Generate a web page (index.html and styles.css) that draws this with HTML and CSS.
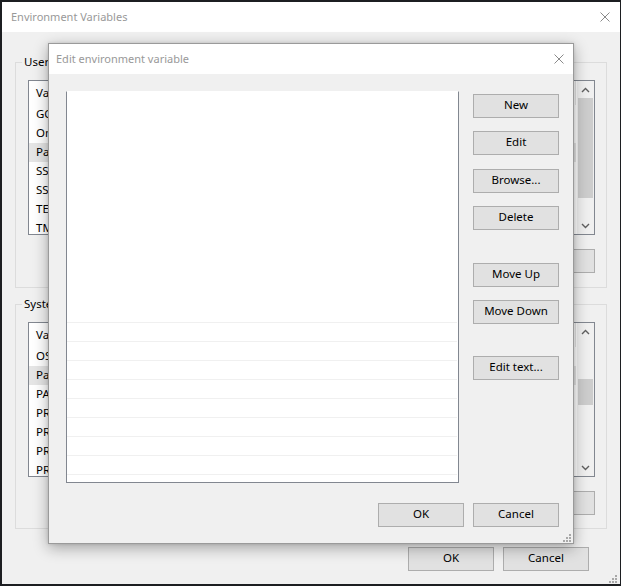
FILE: index.html
```html
<!DOCTYPE html>
<html lang="en">
<head>
    <meta charset="UTF-8">
    <title>Environment Variables</title>
    <link rel="stylesheet" href="styles.css">
</head>
<body>
    <!-- Janela principal -->
    <div class="window">
        <div class="titlebar">
            <span class="title">Environment Variables</span>
            <svg class="close" width="10" height="10" viewBox="0 0 10 10">
                <path d="M0.5 0.5 L9.5 9.5 M9.5 0.5 L0.5 9.5" stroke="#8a8a8a" stroke-width="1" fill="none"/>
            </svg>
        </div>

        <div class="window-body">
            <fieldset class="group">
                <legend>User variables for Admin</legend>
                <div class="listview">
                    <div class="lv-content">
                        <div class="lv-header"><span class="col-var">Variable</span><span class="col-val">Value</span></div>
                        <div class="lv-row"><span class="col-var">GOPATH</span><span class="col-val">C:\Users\Admin\go</span></div>
                        <div class="lv-row"><span class="col-var">OneDrive</span><span class="col-val">C:\Users\Admin\OneDrive</span></div>
                        <div class="lv-row selected"><span class="col-var">Path</span><span class="col-val">C:\Users\Admin\AppData\Local\Microsoft\WindowsApps;</span></div>
                        <div class="lv-row"><span class="col-var">SSH_AUTH_SOCK</span><span class="col-val">\\.\pipe\openssh-ssh-agent</span></div>
                        <div class="lv-row"><span class="col-var">SSH_KEY</span><span class="col-val">C:\Users\Admin\.ssh\id_rsa</span></div>
                        <div class="lv-row"><span class="col-var">TEMP</span><span class="col-val">C:\Users\Admin\AppData\Local\Temp</span></div>
                        <div class="lv-row"><span class="col-var">TMP</span><span class="col-val">C:\Users\Admin\AppData\Local\Temp</span></div>
                    </div>
                    <div class="scrollbar">
                        <div class="sb-btn">
                            <svg width="9" height="6" viewBox="0 0 9 6"><path d="M1 5 L4.5 1.5 L8 5" stroke="#606060" stroke-width="1.4" fill="none"/></svg>
                        </div>
                        <div class="sb-track"><div class="sb-thumb user-thumb"></div></div>
                        <div class="sb-btn">
                            <svg width="9" height="6" viewBox="0 0 9 6"><path d="M1 1 L4.5 4.5 L8 1" stroke="#606060" stroke-width="1.4" fill="none"/></svg>
                        </div>
                    </div>
                </div>
                <div class="btn-row">
                    <button class="btn">New...</button>
                    <button class="btn">Edit...</button>
                    <button class="btn">Delete</button>
                </div>
            </fieldset>

            <fieldset class="group system">
                <legend>System variables</legend>
                <div class="listview">
                    <div class="lv-content">
                        <div class="lv-header"><span class="col-var">Variable</span><span class="col-val">Value</span></div>
                        <div class="lv-row"><span class="col-var">OS</span><span class="col-val">Windows_NT</span></div>
                        <div class="lv-row selected"><span class="col-var">Path</span><span class="col-val">C:\Windows\system32;C:\Windows;</span></div>
                        <div class="lv-row"><span class="col-var">PATHEXT</span><span class="col-val">.COM;.EXE;.BAT;.CMD</span></div>
                        <div class="lv-row"><span class="col-var">PROCESSOR_ARCHITECTURE</span><span class="col-val">AMD64</span></div>
                        <div class="lv-row"><span class="col-var">PROCESSOR_IDENTIFIER</span><span class="col-val">Intel64 Family 6</span></div>
                        <div class="lv-row"><span class="col-var">PROCESSOR_LEVEL</span><span class="col-val">6</span></div>
                        <div class="lv-row"><span class="col-var">PROCESSOR_REVISION</span><span class="col-val">9e0a</span></div>
                    </div>
                    <div class="scrollbar">
                        <div class="sb-btn">
                            <svg width="9" height="6" viewBox="0 0 9 6"><path d="M1 5 L4.5 1.5 L8 5" stroke="#606060" stroke-width="1.4" fill="none"/></svg>
                        </div>
                        <div class="sb-track"><div class="sb-thumb system-thumb"></div></div>
                        <div class="sb-btn">
                            <svg width="9" height="6" viewBox="0 0 9 6"><path d="M1 1 L4.5 4.5 L8 1" stroke="#606060" stroke-width="1.4" fill="none"/></svg>
                        </div>
                    </div>
                </div>
                <div class="btn-row">
                    <button class="btn">New...</button>
                    <button class="btn">Edit...</button>
                    <button class="btn">Delete</button>
                </div>
            </fieldset>

            <div class="footer">
                <button class="btn">OK</button>
                <button class="btn">Cancel</button>
            </div>
        </div>

        <svg class="grip window-grip" width="8" height="8" viewBox="0 0 8 8">
            <rect x="6" y="0" width="2" height="2"/>
            <rect x="3" y="3" width="2" height="2"/><rect x="6" y="3" width="2" height="2"/>
            <rect x="0" y="6" width="2" height="2"/><rect x="3" y="6" width="2" height="2"/><rect x="6" y="6" width="2" height="2"/>
        </svg>
    </div>

    <!-- Diálogo de edição -->
    <div class="dialog">
        <div class="titlebar dialog-titlebar">
            <span class="title">Edit environment variable</span>
            <svg class="close" width="10" height="10" viewBox="0 0 10 10">
                <path d="M0.5 0.5 L9.5 9.5 M9.5 0.5 L0.5 9.5" stroke="#8a8a8a" stroke-width="1" fill="none"/>
            </svg>
        </div>
        <div class="dialog-body">
            <div class="dialog-main">
                <div class="edit-list">
                    <div class="edit-spacer"></div>
                    <div class="edit-row"></div>
                    <div class="edit-row"></div>
                    <div class="edit-row"></div>
                    <div class="edit-row"></div>
                    <div class="edit-row"></div>
                    <div class="edit-row"></div>
                    <div class="edit-row"></div>
                    <div class="edit-row"></div>
                    <div class="edit-row"></div>
                </div>
                <div class="side-buttons">
                    <button class="btn b-new">New</button>
                    <button class="btn b-edit">Edit</button>
                    <button class="btn b-browse">Browse...</button>
                    <button class="btn b-delete">Delete</button>
                    <button class="btn b-up">Move Up</button>
                    <button class="btn b-down">Move Down</button>
                    <button class="btn b-text">Edit text...</button>
                </div>
            </div>
            <div class="dialog-footer">
                <button class="btn">OK</button>
                <button class="btn">Cancel</button>
            </div>
        </div>
        <svg class="grip dialog-grip" width="8" height="8" viewBox="0 0 8 8">
            <rect x="6" y="0" width="2" height="2"/>
            <rect x="3" y="3" width="2" height="2"/><rect x="6" y="3" width="2" height="2"/>
            <rect x="0" y="6" width="2" height="2"/><rect x="3" y="6" width="2" height="2"/><rect x="6" y="6" width="2" height="2"/>
        </svg>
    </div>
</body>
</html>
```

FILE: styles.css
```css
/* Reset */
* {
    box-sizing: border-box;
}

body {
    margin: 0;
    padding: 2px 0 0 2px;
    width: 621px;
    height: 586px;
    overflow: hidden;
    position: relative;
    background: #1c1e21;
    font-family: "Noto Sans", "Segoe UI", sans-serif;
    font-size: 11.5px;
    color: #000;
}

/* Janela principal */
.window {
    position: relative;
    width: 618px;
    height: 582px;
    background: #f0f0f0;
    display: flex;
    flex-direction: column;
}

.titlebar {
    height: 30px;
    flex: none;
    background: #fff;
    display: flex;
    align-items: center;
    justify-content: space-between;
    padding: 0 10px 2px 9px;
}

.title {
    font-size: 11px;
    color: #999;
}

.close {
    display: block;
    margin-top: 2px;
}

.window-body {
    padding: 22px 13px 0 13px;
}

.group {
    margin: 0;
    padding: 10px 11px 14px 12px;
    border: 1px solid #dcdcdc;
    min-width: 0;
}

.group legend {
    margin-left: -6px;
    padding: 0 2px;
    line-height: 15px;
    height: 16px;
}

.group.system {
    margin-top: 8px;
    padding-bottom: 13px;
}

/* Lista */
.listview {
    height: 155px;
    border: 1px solid #828790;
    background: #fff;
    display: flex;
    overflow: hidden;
}

.lv-content {
    flex: 1;
    overflow: hidden;
}

.lv-header,
.lv-row {
    display: flex;
    width: 547px;
    white-space: nowrap;
}

.lv-header {
    height: 24px;
    align-items: center;
}

.lv-header span {
    height: 24px;
    line-height: 23px;
    border-right: 1px solid #e5e5e5;
}

.lv-row {
    height: 19px;
    line-height: 17px;
}

.lv-row.selected {
    background: #e5e5e5;
}

.col-var {
    width: 170px;
    padding-left: 7px;
    overflow: hidden;
}

.col-val {
    width: 377px;
    padding-left: 6px;
    overflow: hidden;
}

.scrollbar {
    width: 17px;
    background: #f0f0f0;
    display: flex;
    flex-direction: column;
}

.sb-btn {
    height: 17px;
    display: flex;
    align-items: center;
    justify-content: center;
}

.sb-track {
    flex: 1;
}

.sb-thumb {
    margin: 0 1px;
    background: #cdcdcd;
}

.user-thumb {
    height: 100px;
}

.system-thumb {
    margin-top: 39px;
    height: 26px;
}

/* Botões */
.btn {
    width: 86px;
    height: 24px;
    padding: 0 0 2px;
    background: #e1e1e1;
    border: 1px solid #adadad;
    font-family: inherit;
    font-size: 11.5px;
    line-height: 20px;
    color: #000;
}

.btn-row {
    margin-top: 14px;
    display: flex;
    justify-content: flex-end;
    gap: 9px;
}

.footer {
    margin: 18px 18px 0 0;
    display: flex;
    justify-content: flex-end;
    gap: 9px;
}

.grip {
    position: absolute;
    fill: #a8a8a8;
}

.window-grip {
    right: 3px;
    bottom: 1px;
}

/* Diálogo de edição */
.dialog {
    position: absolute;
    left: 48px;
    top: 43px;
    width: 526px;
    height: 501px;
    background: #f0f0f0;
    border: 1px solid #9a9a9a;
    box-shadow: 0 4px 14px rgba(0, 0, 0, 0.32), 0 0 3px rgba(0, 0, 0, 0.12);
    display: flex;
    flex-direction: column;
}

.dialog-titlebar {
    padding: 0 9px 2px 7px;
}

.dialog-body {
    flex: 1;
    padding: 17px 14px 16px 17px;
    display: flex;
    flex-direction: column;
}

.dialog-main {
    display: flex;
    gap: 14px;
}

.edit-list {
    width: 393px;
    height: 392px;
    background: #fff;
    border: 1px solid #828790;
    border-top-color: #fff;
    overflow: hidden;
}

.edit-spacer {
    height: 230px;
}

.edit-row {
    height: 19px;
    margin-right: 1px;
    border-top: 1px solid #f0f0f0;
}

.side-buttons {
    display: flex;
    flex-direction: column;
}

.b-new { margin-top: 3px; }
.b-edit { margin-top: 13px; }
.b-browse { margin-top: 14px; }
.b-delete { margin-top: 13px; }
.b-up { margin-top: 33px; }
.b-down { margin-top: 13px; }
.b-text { margin-top: 32px; }

.dialog-footer {
    margin-top: 20px;
    display: flex;
    justify-content: flex-end;
    gap: 9px;
}

.dialog-grip {
    right: 2px;
    bottom: 1px;
}
```
